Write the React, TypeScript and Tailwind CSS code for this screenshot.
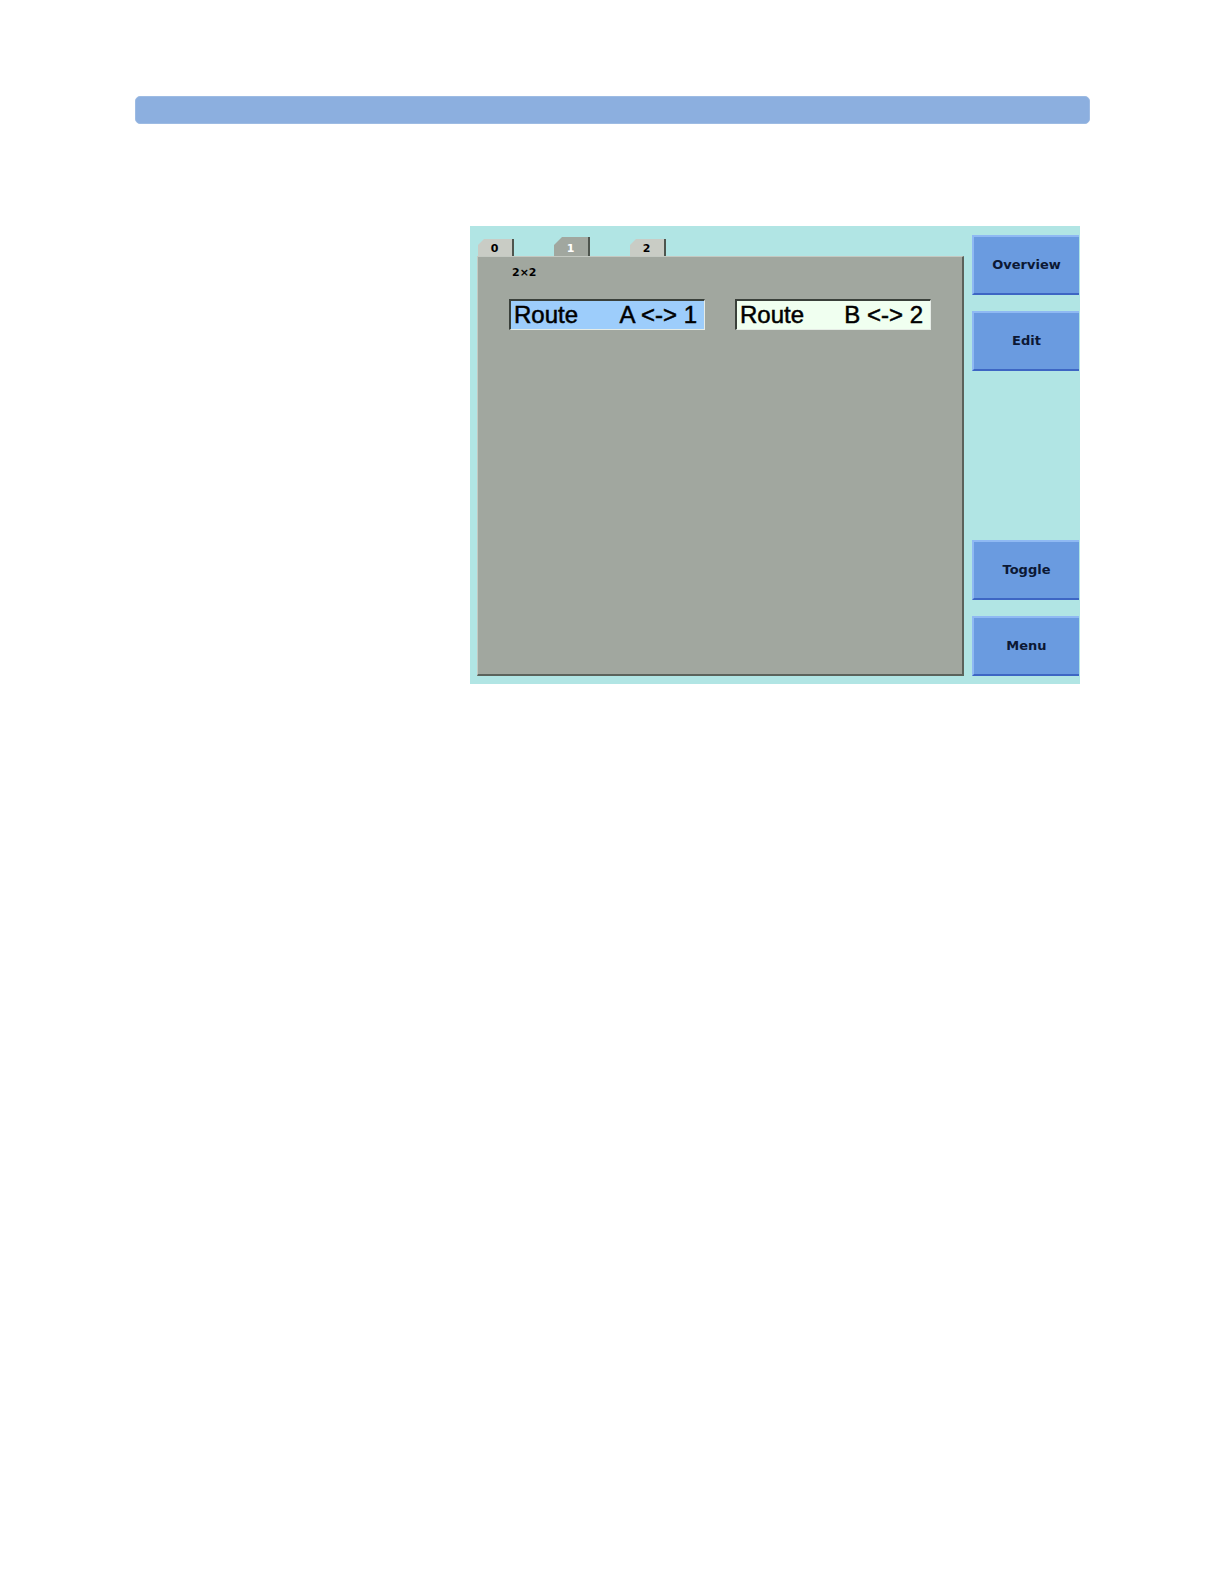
import React from "react";

const tabs = [
  { label: "0", active: false },
  { label: "1", active: true },
  { label: "2", active: false },
];

function Tab({ label, active }: { label: string; active: boolean }) {
  return (
    <div
      className={
        "relative w-[36px] flex items-end justify-center pb-[1px] border-r-2 border-[#4e554e] text-[11px] font-bold leading-none " +
        (active
          ? "h-[19px] bg-[#a1a79f] text-white [clip-path:polygon(8px_0,100%_0,100%_100%,0_100%,0_8px)]"
          : "h-[17px] bg-[#c9ccc5] text-black [clip-path:polygon(6px_0,100%_0,100%_100%,0_100%,0_6px)]")
      }
    >
      <span className="pb-[1px] pr-[1px]">{label}</span>
    </div>
  );
}

function RouteBox({ left, right, bg }: { left: string; right: string; bg: string }) {
  return (
    <div
      className={
        "w-[196px] h-[31px] flex items-center justify-between pl-[3px] pr-[7px] border-l-2 border-t-2 border-[#3a403a] border-r border-b border-r-[#e6ece6] border-b-[#e6ece6] text-[24px] leading-none text-black [-webkit-text-stroke:0.5px_black] " +
        bg
      }
      style={{ fontFamily: '"Liberation Sans", Arial, sans-serif' }}
    >
      <span>{left}</span>
      <span className="whitespace-pre">{right}</span>
    </div>
  );
}

function SideButton({ label }: { label: string }) {
  return (
    <div className="w-[107px] h-[60px] flex items-center justify-center bg-[#6a9be0] border-t-2 border-l-2 border-t-[#8fb9f3] border-l-[#8fb9f3] border-b-2 border-b-[#3d66c4] text-[13px] font-bold text-[#0c1834]">
      {label}
    </div>
  );
}

export default function App() {
  return (
    <div
      className="bg-white pb-[40px]"
      style={{ fontFamily: '"DejaVu Sans", "Liberation Sans", sans-serif' }}
    >
      <div className="pt-[96px] pl-[135px]">
        <div className="w-[955px] h-[28px] rounded-[5px] bg-[#8cafdf] border border-[#9dbbe3]" />
      </div>
      <div className="pt-[102px] pl-[470px]">
        <div className="w-[610px] h-[458px] bg-[#b1e5e4] flex pl-[7px] pr-[1px] pb-[8px]">
          <div className="flex flex-col w-[487px]">
            <div className="h-[30px] flex items-end pl-[1px] gap-[40px]">
              {tabs.map((t) => (
                <Tab key={t.label} label={t.label} active={t.active} />
              ))}
            </div>
            <div className="flex-1 bg-[#a1a79f] border-l border-t border-[#c4c9c2] border-r-2 border-b-2 border-r-[#5b625b] border-b-[#5b625b] pl-[31px]">
              <div className="pt-[10px] pl-[3px] text-[11px] font-bold text-black leading-none h-[42px]">
                2×2
              </div>
              <div className="flex gap-[30px]">
                <RouteBox left="Route" right="A <-> 1" bg="bg-[#9dcdfb]" />
                <RouteBox left="Route" right="B <-> 2" bg="bg-[#f0fff0]" />
              </div>
            </div>
          </div>
          <div className="ml-[8px] pt-[9px] flex flex-col justify-between">
            <div className="flex flex-col gap-[16px]">
              <SideButton label="Overview" />
              <SideButton label="Edit" />
            </div>
            <div className="flex flex-col gap-[16px]">
              <SideButton label="Toggle" />
              <SideButton label="Menu" />
            </div>
          </div>
        </div>
      </div>
    </div>
  );
}
